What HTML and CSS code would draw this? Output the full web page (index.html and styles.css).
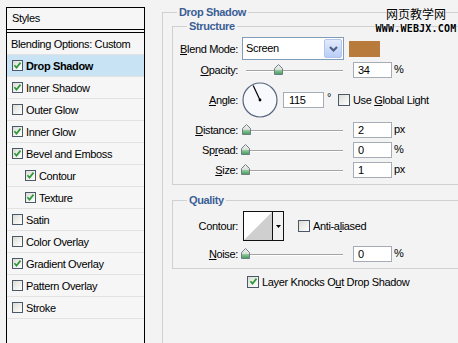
FILE: index.html
```html
<!DOCTYPE html>
<html>
<head>
    <meta charset="UTF-8">
    <title>Layer Style</title>
    <link rel="stylesheet" href="styles.css">
</head>
<body>
    <!-- shared gradient for slider thumbs -->
    <svg class="defs" width="0" height="0">
        <defs>
            <linearGradient id="thumbFill" x1="0" y1="0" x2="0" y2="1">
                <stop offset="0" stop-color="#f4f6f4"/>
                <stop offset="0.55" stop-color="#d6dcd6"/>
                <stop offset="0.6" stop-color="#8cc79a"/>
                <stop offset="1" stop-color="#3f9a57"/>
            </linearGradient>
        </defs>
    </svg>

    <div class="dialog">
        <!-- Styles list -->
        <div class="styles-panel">
            <div class="panel-head">Styles</div>
            <ul class="style-list">
                <li class="blend-row">Blending Options: Custom</li>
                <li class="selected"><span class="check on"><svg viewBox="0 0 9 9"><path d="M1.4 4.3l2.1 2.3 4-5"/></svg></span><b>Drop Shadow</b></li>
                <li><span class="check on"><svg viewBox="0 0 9 9"><path d="M1.4 4.3l2.1 2.3 4-5"/></svg></span>Inner Shadow</li>
                <li><span class="check"></span>Outer Glow</li>
                <li><span class="check on"><svg viewBox="0 0 9 9"><path d="M1.4 4.3l2.1 2.3 4-5"/></svg></span>Inner Glow</li>
                <li><span class="check on"><svg viewBox="0 0 9 9"><path d="M1.4 4.3l2.1 2.3 4-5"/></svg></span>Bevel and Emboss</li>
                <li class="sub"><span class="check on"><svg viewBox="0 0 9 9"><path d="M1.4 4.3l2.1 2.3 4-5"/></svg></span>Contour</li>
                <li class="sub"><span class="check on"><svg viewBox="0 0 9 9"><path d="M1.4 4.3l2.1 2.3 4-5"/></svg></span>Texture</li>
                <li><span class="check"></span>Satin</li>
                <li><span class="check"></span>Color Overlay</li>
                <li><span class="check on"><svg viewBox="0 0 9 9"><path d="M1.4 4.3l2.1 2.3 4-5"/></svg></span>Gradient Overlay</li>
                <li><span class="check"></span>Pattern Overlay</li>
                <li><span class="check"></span>Stroke</li>
            </ul>
        </div>

        <!-- Drop Shadow settings -->
        <fieldset class="group effect">
            <legend>Drop Shadow</legend>

            <fieldset class="group structure">
                <legend>Structure</legend>
                <div class="row blend">
                    <label class="lbl"><u>B</u>lend Mode:</label>
                    <div class="select">
                        <span class="select-text">Screen</span>
                        <span class="select-btn"><svg viewBox="0 0 9 6"><path d="M1 1l3.5 3.5L8 1"/></svg></span>
                    </div>
                    <span class="swatch"></span>
                </div>
                <div class="row">
                    <label class="lbl"><u>O</u>pacity:</label>
                    <div class="slider"><span class="thumb" style="left: 34%"><svg viewBox="0 0 9 11"><path d="M0.5 4.5L4.5 0.5L8.5 4.5V10.5H0.5Z"/></svg></span></div>
                    <span class="num">34</span>
                    <span class="unit">%</span>
                </div>
                <div class="row angle">
                    <label class="lbl"><u>A</u>ngle:</label>
                    <svg class="dial" viewBox="0 0 36 36">
                        <circle cx="18" cy="18" r="17" class="dial-face"/>
                        <line x1="18" y1="18" x2="11.2" y2="3.5" class="dial-hand"/>
                        <circle cx="18" cy="18" r="1.4" class="dial-dot"/>
                    </svg>
                    <span class="num wide">115</span>
                    <span class="deg">°</span>
                    <span class="check box12"></span>
                    <span class="check-text">Use <u>G</u>lobal Light</span>
                </div>
                <div class="row">
                    <label class="lbl"><u>D</u>istance:</label>
                    <div class="slider"><span class="thumb" style="left: 0.8%"><svg viewBox="0 0 9 11"><path d="M0.5 4.5L4.5 0.5L8.5 4.5V10.5H0.5Z"/></svg></span></div>
                    <span class="num">2</span>
                    <span class="unit">px</span>
                </div>
                <div class="row">
                    <label class="lbl">Sp<u>r</u>ead:</label>
                    <div class="slider"><span class="thumb" style="left: 0%"><svg viewBox="0 0 9 11"><path d="M0.5 4.5L4.5 0.5L8.5 4.5V10.5H0.5Z"/></svg></span></div>
                    <span class="num">0</span>
                    <span class="unit">%</span>
                </div>
                <div class="row">
                    <label class="lbl"><u>S</u>ize:</label>
                    <div class="slider"><span class="thumb" style="left: 0.4%"><svg viewBox="0 0 9 11"><path d="M0.5 4.5L4.5 0.5L8.5 4.5V10.5H0.5Z"/></svg></span></div>
                    <span class="num">1</span>
                    <span class="unit">px</span>
                </div>
            </fieldset>

            <fieldset class="group quality">
                <legend>Quality</legend>
                <div class="row contour-row">
                    <label class="lbl">Contour:</label>
                    <div class="contour">
                        <span class="curve"><svg viewBox="0 0 28 28" preserveAspectRatio="none"><polygon points="0,28 28,0 28,28"/></svg></span>
                        <span class="contour-btn"><svg viewBox="0 0 5 3"><polygon points="0,0 5,0 2.5,3"/></svg></span>
                    </div>
                    <span class="check box12 anti"></span>
                    <span class="check-text">Anti-a<u>l</u>iased</span>
                </div>
                <div class="row noise">
                    <label class="lbl"><u>N</u>oise:</label>
                    <div class="slider"><span class="thumb" style="left: 0%"><svg viewBox="0 0 9 11"><path d="M0.5 4.5L4.5 0.5L8.5 4.5V10.5H0.5Z"/></svg></span></div>
                    <span class="num">0</span>
                    <span class="unit">%</span>
                </div>
            </fieldset>

            <div class="knockout">
                <span class="check box12 on"><svg viewBox="0 0 9 9"><path d="M1.4 4.3l2.1 2.3 4-5"/></svg></span>
                <span class="check-text">Layer Knocks O<u>u</u>t Drop Shadow</span>
            </div>
        </fieldset>
    </div>

    <div class="watermark">
        <div class="wm-cn">网页教学网</div>
        <div class="wm-url">WWW.WEBJX.COM</div>
    </div>
</body>
</html>
```

FILE: styles.css
```css
body {
    margin: 0;
    background: #f3f3f3;
    font-family: "Liberation Sans", Arial, sans-serif;
    font-size: 11px;
    letter-spacing: -0.35px;
    color: #000;
    overflow: hidden;
}
.defs {
    position: absolute;
}
.dialog {
    display: flex;
    align-items: flex-start;
    padding: 6px 0 0 6px;
    height: 343px;
    box-sizing: border-box;
}

/* left list */
.styles-panel {
    width: 139px;
    height: 400px;
    margin-top: 1px;
    flex-shrink: 0;
    box-sizing: border-box;
    border: 1px solid #000;
    background: #f6f6f6;
}
.panel-head {
    height: 21px;
    line-height: 21px;
    padding-left: 5px;
    border-bottom: 1px solid #000;
}
.style-list {
    list-style: none;
    margin: 2px 0 0;
    padding: 0;
    border-top: 1px solid #000;
}
.style-list li {
    display: flex;
    align-items: center;
    gap: 3px;
    height: 21px;
    padding-left: 5px;
    border-bottom: 1px solid #e2e2e2;
}
.style-list li.blend-row { padding-left: 4px; }
.style-list li.sub { padding-left: 18px; }
.style-list li.selected { background: #c8e4f4; }

.check {
    display: inline-flex;
    align-items: center;
    justify-content: center;
    width: 11px;
    height: 11px;
    flex-shrink: 0;
    box-sizing: border-box;
    border: 1px solid #4a5868;
    background: linear-gradient(135deg, #dcdcd6, #ffffff);
}
.check.box12 {
    width: 12px;
    height: 12px;
}
.check svg {
    width: 9px;
    height: 9px;
    fill: none;
    stroke: #2d9a37;
    stroke-width: 1.7;
}

/* fieldsets */
.group {
    margin: 0;
    padding: 0;
    min-width: 0;
    border: 1px solid #d0d0d0;
}
.group legend {
    margin-left: 14px;
    padding: 0 2px;
    line-height: 13px;
    font-weight: bold;
    color: #3b5e95;
}
.effect {
    width: 330px;
    height: 400px;
    margin: 0 0 0 17px;
    padding: 1px 0 0 9px;
    flex-shrink: 0;
    box-sizing: border-box;
}
.effect > legend {
    margin-left: 5px;
}
.structure {
    padding: 4px 0 4px;
}
.quality {
    margin-top: 9px;
    padding: 4px 0 4px;
}

/* rows */
.row {
    display: flex;
    align-items: center;
    height: 20px;
}
.row.blend { height: 23px; }
.row.angle { height: 40px; }
.row.contour-row { height: 30px; }
.row.noise { margin-top: 3px; }
.lbl {
    width: 65px;
    margin-right: 4px;
    flex-shrink: 0;
    text-align: right;
}

.select {
    display: flex;
    width: 102px;
    height: 23px;
    box-sizing: border-box;
    border: 1px solid #7f9db9;
    background: #fff;
}
.select-text {
    flex: 1;
    padding-left: 3px;
    line-height: 21px;
}
.select-btn {
    display: flex;
    align-items: center;
    justify-content: center;
    width: 16px;
    margin: 1px;
    border: 1px solid #b3c5ec;
    border-radius: 2px;
    background: linear-gradient(#e3ebfd, #b9cdf5);
}
.select-btn svg {
    width: 9px;
    height: 6px;
    fill: none;
    stroke: #4b5c80;
    stroke-width: 2;
}
.swatch {
    width: 31px;
    height: 16px;
    margin-left: 5px;
    background: #b97b3b;
}

.slider {
    position: relative;
    width: 97px;
    height: 12px;
    margin-left: 4px;
}
.slider::before {
    content: "";
    position: absolute;
    left: 0;
    right: 0;
    top: 6px;
    height: 1px;
    background: #a4a4a4;
    border-bottom: 1px solid #fff;
}
.thumb {
    position: absolute;
    top: 0;
    width: 9px;
    height: 11px;
    margin-left: -5px;
}
.thumb svg {
    display: block;
    width: 9px;
    height: 11px;
    fill: url(#thumbFill);
    stroke: #6f7e80;
    stroke-width: 1;
}

.num {
    width: 39px;
    height: 16px;
    margin-left: 10px;
    padding-left: 4px;
    box-sizing: border-box;
    border: 1px solid #a5acb5;
    background: #fff;
    line-height: 14px;
}
.num.wide {
    width: 41px;
    margin-left: 5px;
    padding-left: 5px;
}
.unit {
    margin-left: 2px;
    margin-top: -2px;
}
.deg {
    margin-left: 3px;
    margin-top: -6px;
    width: 11px;
}
.check-text {
    margin-left: 3px;
}

.dial {
    width: 36px;
    height: 36px;
}
.dial-face {
    fill: #f7f9fc;
    stroke: #56667e;
    stroke-width: 1.2;
}
.dial-hand {
    stroke: #000;
    stroke-width: 1.2;
}
.dial-dot {
    fill: #000;
}

.contour {
    display: flex;
    width: 41px;
    height: 30px;
    margin-left: 1px;
    box-sizing: border-box;
    border: 1px solid #111;
    background: #fff;
}
.curve {
    width: 28px;
}
.curve svg {
    display: block;
    width: 28px;
    height: 28px;
    fill: #cfcfcf;
}
.contour-btn {
    display: flex;
    align-items: center;
    justify-content: center;
    flex: 1;
    border-left: 1px solid #111;
    background: #f2f2f2;
}
.contour-btn svg {
    width: 5px;
    height: 3px;
    fill: #000;
}
.check.anti {
    margin-left: 14px;
}

.knockout {
    display: flex;
    align-items: center;
    height: 13px;
    margin-top: 6px;
    padding-left: 75px;
}

/* watermark over the corner */
.watermark {
    position: absolute;
    top: 7px;
    left: 374px;
    width: 84px;
    text-align: center;
    letter-spacing: 0;
    text-shadow: 0 0 2px #fff, 0 0 2px #fff;
}
.wm-cn {
    font-family: "Noto Sans CJK SC", sans-serif;
    font-size: 12px;
    line-height: 14px;
}
.wm-url {
    margin-top: 3px;
    font-family: "DejaVu Sans Mono", monospace;
    font-weight: bold;
    font-size: 10px;
    line-height: 10px;
    letter-spacing: 0.2px;
}
```
